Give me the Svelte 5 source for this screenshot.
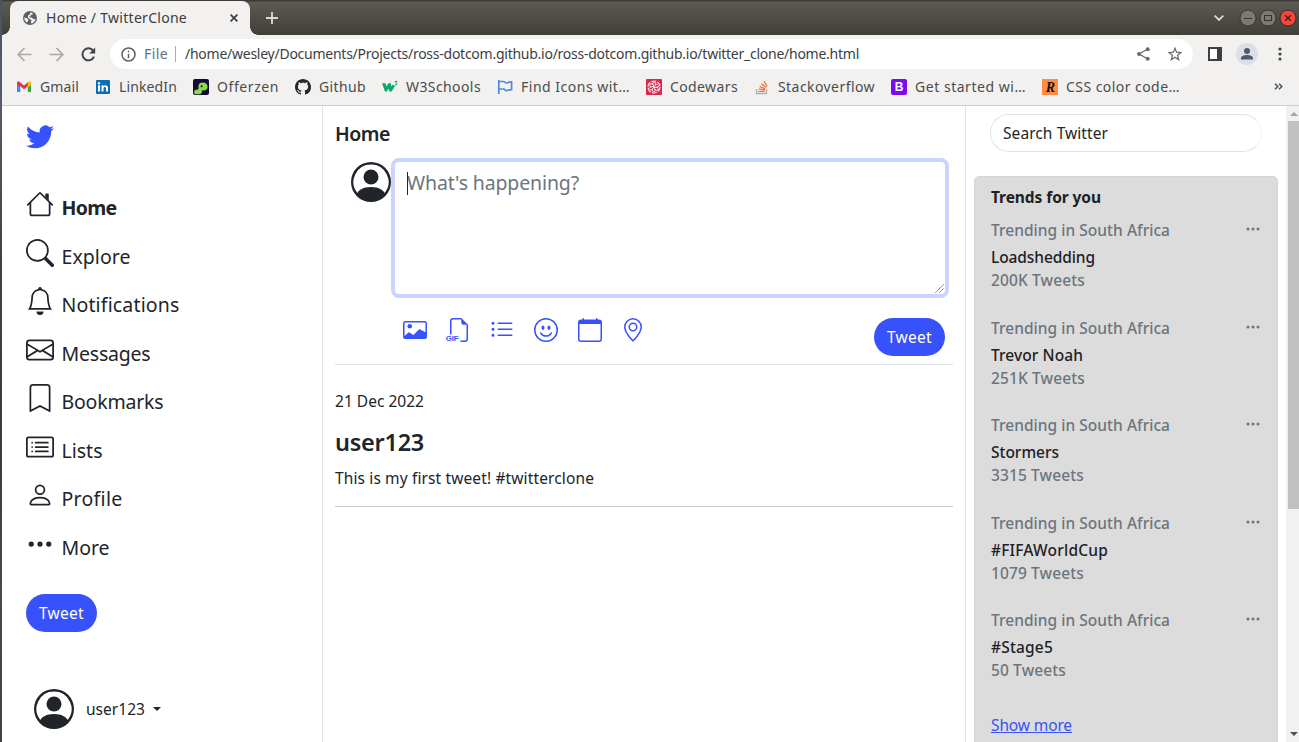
<script>
  // Spreads a label's letters so that it fills the given width.
  function fit(node, width) {
    const natural = node.getBoundingClientRect().width;
    const count = [...node.textContent].length;
    node.style.letterSpacing = (width - natural) / count + 'px';
  }

  const personCircle = [
    'M11 6a3 3 0 1 1-6 0 3 3 0 0 1 6 0z',
    'M0 8a8 8 0 1 1 16 0A8 8 0 0 1 0 8zm8-7a7 7 0 0 0-5.468 11.37C3.242 11.226 4.805 10 8 10s4.757 1.225 5.468 2.37A7 7 0 0 0 8 1z'
  ];
  const twitter = ['M5.026 15c6.038 0 9.341-5.003 9.341-9.334 0-.14 0-.282-.006-.422A6.685 6.685 0 0 0 16 3.542a6.658 6.658 0 0 1-1.889.518 3.301 3.301 0 0 0 1.447-1.817 6.533 6.533 0 0 1-2.087.793A3.286 3.286 0 0 0 7.875 6.03a9.325 9.325 0 0 1-6.767-3.429 3.289 3.289 0 0 0 1.018 4.382A3.323 3.323 0 0 1 .64 6.575v.045a3.288 3.288 0 0 0 2.632 3.218 3.203 3.203 0 0 1-.865.115 3.23 3.23 0 0 1-.614-.057 3.283 3.283 0 0 0 3.067 2.277A6.588 6.588 0 0 1 .78 13.58a6.32 6.32 0 0 1-.78-.045A9.344 9.344 0 0 0 5.026 15z'];
  const dots = ['M3 9.5a1.5 1.5 0 1 1 0-3 1.5 1.5 0 0 1 0 3zm5 0a1.5 1.5 0 1 1 0-3 1.5 1.5 0 0 1 0 3zm5 0a1.5 1.5 0 1 1 0-3 1.5 1.5 0 0 1 0 3z'];
  const github = ['M8 0C3.58 0 0 3.58 0 8c0 3.54 2.29 6.53 5.47 7.59.4.07.55-.17.55-.38 0-.19-.01-.82-.01-1.49-2.01.37-2.53-.49-2.69-.94-.09-.23-.48-.94-.82-1.13-.28-.15-.68-.52-.01-.53.63-.01 1.08.58 1.23.82.72 1.21 1.87.87 2.33.66.07-.52.28-.87.51-1.07-1.78-.2-3.64-.89-3.64-3.95 0-.87.31-1.59.82-2.15-.08-.2-.36-1.02.08-2.12 0 0 .67-.21 2.2.82.64-.18 1.32-.27 2-.27.68 0 1.36.09 2 .27 1.53-1.04 2.2-.82 2.2-.82.44 1.1.16 1.92.08 2.12.51.56.82 1.27.82 2.15 0 3.07-1.87 3.75-3.65 3.95.29.25.54.73.54 1.48 0 1.07-.01 1.93-.01 2.2 0 .21.15.46.55.38A8.012 8.012 0 0 0 16 8c0-4.42-3.58-8-8-8z'];

  const nav = [
    { label: 'Home', width: 55, active: true, paths: [
      'M2 13.5V7h1v6.5a.5.5 0 0 0 .5.5h9a.5.5 0 0 0 .5-.5V7h1v6.5a1.5 1.5 0 0 1-1.5 1.5h-9A1.5 1.5 0 0 1 2 13.5zm11-11V6l-2-2V2.5a.5.5 0 0 1 .5-.5h1a.5.5 0 0 1 .5.5z',
      'M7.293 1.5a1 1 0 0 1 1.414 0l6.647 6.646a.5.5 0 0 1-.708.708L8 2.207 1.354 8.854a.5.5 0 1 1-.708-.708L7.293 1.5z'] },
    { label: 'Explore', width: 69, paths: ['M11.742 10.344a6.5 6.5 0 1 0-1.397 1.398h-.001c.03.04.062.078.098.115l3.85 3.85a1 1 0 0 0 1.415-1.414l-3.85-3.85a1.007 1.007 0 0 0-.115-.1zM12 6.5a5.5 5.5 0 1 1-11 0 5.5 5.5 0 0 1 11 0z'] },
    { label: 'Notifications', width: 118, paths: ['M8 16a2 2 0 0 0 2-2H6a2 2 0 0 0 2 2zM8 1.918l-.797.161A4.002 4.002 0 0 0 4 6c0 .628-.134 2.197-.459 3.742-.16.767-.376 1.566-.663 2.258h10.244c-.287-.692-.502-1.49-.663-2.258C12.134 8.197 12 6.628 12 6a4.002 4.002 0 0 0-3.203-3.92L8 1.917zM14.22 12c.223.447.481.801.78 1H1c.299-.199.557-.553.78-1C2.68 10.2 3 6.88 3 6c0-2.42 1.72-4.44 4.005-4.901a1 1 0 1 1 1.99 0A5.002 5.002 0 0 1 13 6c0 .88.32 4.2 1.22 6z'] },
    { label: 'Messages', width: 89, paths: ['M0 4a2 2 0 0 1 2-2h12a2 2 0 0 1 2 2v8a2 2 0 0 1-2 2H2a2 2 0 0 1-2-2V4Zm2-1a1 1 0 0 0-1 1v.217l7 4.2 7-4.2V4a1 1 0 0 0-1-1H2Zm13 2.383-4.708 2.825L15 11.105V5.383Zm-.034 6.876-5.64-3.471L8 9.583l-1.326-.795-5.64 3.47A1 1 0 0 0 2 13h12a1 1 0 0 0 .966-.741ZM1 11.105l4.708-2.897L1 5.383v5.722Z'] },
    { label: 'Bookmarks', width: 102, paths: ['M2 2a2 2 0 0 1 2-2h8a2 2 0 0 1 2 2v13.5a.5.5 0 0 1-.777.416L8 13.101l-5.223 2.815A.5.5 0 0 1 2 15.5V2zm2-1a1 1 0 0 0-1 1v12.566l4.723-2.482a.5.5 0 0 1 .554 0L13 14.566V2a1 1 0 0 0-1-1H4z'] },
    { label: 'Lists', width: 41, paths: [
      'M14.5 3a.5.5 0 0 1 .5.5v9a.5.5 0 0 1-.5.5h-13a.5.5 0 0 1-.5-.5v-9a.5.5 0 0 1 .5-.5h13zm-13-1A1.5 1.5 0 0 0 0 3.5v9A1.5 1.5 0 0 0 1.5 14h13a1.5 1.5 0 0 0 1.5-1.5v-9A1.5 1.5 0 0 0 14.5 2h-13z',
      'M5 8a.5.5 0 0 1 .5-.5h7a.5.5 0 0 1 0 1h-7A.5.5 0 0 1 5 8zm0-2.5a.5.5 0 0 1 .5-.5h7a.5.5 0 0 1 0 1h-7a.5.5 0 0 1-.5-.5zm0 5a.5.5 0 0 1 .5-.5h7a.5.5 0 0 1 0 1h-7a.5.5 0 0 1-.5-.5zm-1-5a.5.5 0 1 1-1 0 .5.5 0 0 1 1 0zM4 8a.5.5 0 1 1-1 0 .5.5 0 0 1 1 0zm0 2.5a.5.5 0 1 1-1 0 .5.5 0 0 1 1 0z'] },
    { label: 'Profile', width: 61, paths: ['M8 8a3 3 0 1 0 0-6 3 3 0 0 0 0 6Zm2-3a2 2 0 1 1-4 0 2 2 0 0 1 4 0Zm4 8c0 1-1 1-1 1H3s-1 0-1-1 1-4 6-4 6 3 6 4Zm-1-.004c-.001-.246-.154-.986-.832-1.664C11.516 10.68 10.289 10 8 10c-2.29 0-3.516.68-4.168 1.332-.678.678-.83 1.418-.832 1.664h10Z'] },
    { label: 'More', width: 48, paths: dots }
  ];

  const tools = [
    { paths: ['M6.002 5.5a1.5 1.5 0 1 1-3 0 1.5 1.5 0 0 1 3 0z', 'M1.5 2A1.5 1.5 0 0 0 0 3.5v9A1.5 1.5 0 0 0 1.5 14h13a1.5 1.5 0 0 0 1.5-1.5v-9A1.5 1.5 0 0 0 14.5 2h-13zm13 1a.5.5 0 0 1 .5.5v6l-3.775-1.947a.5.5 0 0 0-.577.093l-3.71 3.71-2.66-1.772a.5.5 0 0 0-.63.062L1.002 12v.54A.505.505 0 0 1 1 12.5v-9a.5.5 0 0 1 .5-.5h13z'] },
    { gif: true, paths: ['M14 4.5V14a2 2 0 0 1-2 2H9v-1h3a1 1 0 0 0 1-1V4.5h-2A1.5 1.5 0 0 1 9.5 3V1H4a1 1 0 0 0-1 1v9H2V2a2 2 0 0 1 2-2h5.5L14 4.5Z'] },
    { paths: ['M5 11.5a.5.5 0 0 1 .5-.5h9a.5.5 0 0 1 0 1h-9a.5.5 0 0 1-.5-.5zm0-4a.5.5 0 0 1 .5-.5h9a.5.5 0 0 1 0 1h-9a.5.5 0 0 1-.5-.5zm0-4a.5.5 0 0 1 .5-.5h9a.5.5 0 0 1 0 1h-9a.5.5 0 0 1-.5-.5zm-3 1a1 1 0 1 0 0-2 1 1 0 0 0 0 2zm0 4a1 1 0 1 0 0-2 1 1 0 0 0 0 2zm0 4a1 1 0 1 0 0-2 1 1 0 0 0 0 2z'] },
    { paths: ['M8 15A7 7 0 1 1 8 1a7 7 0 0 1 0 14zm0 1A8 8 0 1 0 8 0a8 8 0 0 0 0 16z', 'M4.285 9.567a.5.5 0 0 1 .683.183A3.498 3.498 0 0 0 8 11.5a3.498 3.498 0 0 0 3.032-1.75.5.5 0 1 1 .866.5A4.498 4.498 0 0 1 8 12.5a4.498 4.498 0 0 1-3.898-2.25.5.5 0 0 1 .183-.683zM7 6.5C7 7.328 6.552 8 6 8s-1-.672-1-1.5S5.448 5 6 5s1 .672 1 1.5zm4 0c0 .828-.448 1.5-1 1.5s-1-.672-1-1.5S9.448 5 10 5s1 .672 1 1.5z'] },
    { paths: ['M3.5 0a.5.5 0 0 1 .5.5V1h8V.5a.5.5 0 0 1 1 0V1h1a2 2 0 0 1 2 2v11a2 2 0 0 1-2 2H2a2 2 0 0 1-2-2V3a2 2 0 0 1 2-2h1V.5a.5.5 0 0 1 .5-.5zM1 4v10a1 1 0 0 0 1 1h12a1 1 0 0 0 1-1V4H1z'] },
    { paths: ['M12.166 8.94c-.524 1.062-1.234 2.12-1.96 3.07A31.493 31.493 0 0 1 8 14.58a31.481 31.481 0 0 1-2.206-2.57c-.726-.95-1.436-2.008-1.96-3.07C3.304 7.867 3 6.862 3 6a5 5 0 0 1 10 0c0 .862-.305 1.867-.834 2.94zM8 16s6-5.686 6-10A6 6 0 0 0 2 6c0 4.314 6 10 6 10z', 'M8 8a2 2 0 1 1 0-4 2 2 0 0 1 0 4zm0 1a3 3 0 1 0 0-6 3 3 0 0 0 0 6z'] }
  ];

  const bookmarks = [
    { id: 'gmail', label: 'Gmail', width: 39 },
    { id: 'linkedin', label: 'LinkedIn', width: 58 },
    { id: 'offerzen', label: 'Offerzen', width: 62 },
    { id: 'github', label: 'Github', width: 47 },
    { id: 'w3', label: 'W3Schools', width: 75 },
    { id: 'flag', label: 'Find Icons wit…', width: 109 },
    { id: 'codewars', label: 'Codewars', width: 68 },
    { id: 'stack', label: 'Stackoverflow', width: 97 },
    { id: 'bootstrap', label: 'Get started wi…', width: 111 },
    { id: 'rapid', label: 'CSS color code…', width: 114 }
  ];

  const trends = [
    { name: 'Loadshedding', nameWidth: 104, count: '200K Tweets', countWidth: 94 },
    { name: 'Trevor Noah', nameWidth: 92, count: '251K Tweets', countWidth: 94 },
    { name: 'Stormers', nameWidth: 68, count: '3315 Tweets', countWidth: 93 },
    { name: '#FIFAWorldCup', nameWidth: 117, count: '1079 Tweets', countWidth: 93 },
    { name: '#Stage5', nameWidth: 62, count: '50 Tweets', countWidth: 75 }
  ];
</script>

{#snippet icon(paths, size)}
  <svg class="icon" width={size} height={size} viewBox="0 0 16 16" fill="currentColor">
    {#each paths as d}<path {d} fill-rule="evenodd" />{/each}
  </svg>
{/snippet}

<div class="screen">
  <div class="desktop"></div>
  <div class="window">
    <header class="tabstrip">
      <div class="tab">
        <svg width="14" height="14" viewBox="0 0 14 14">
          <circle cx="7" cy="7" r="7" fill="#5b6066" />
          <path d="M1.2 6.4 3.8 7.3 5.3 8.2 5.2 10.2 3.6 11.6A6 6 0 0 1 1.2 6.4ZM7.2 1.2 10 2.2 9.4 3.4 7.8 3.9 7.4 5.2 6 5.6 7 6.6 9 6.4 10 8 12.6 8.2A6 6 0 0 1 8.4 12.6L7.8 10.8 8.8 9.6 7 8.2 4.9 6.5 5 4.5 7 3.2Z" fill="#f2f1f0" />
        </svg>
        <span class="tab-title"><span use:fit={141}>Home / TwitterClone</span></span>
        <svg width="8" height="8" viewBox="0 0 8 8" stroke="#3c3d3e" stroke-width="1.7"><path d="M.6.6 7.4 7.4M7.4.6.6 7.4" /></svg>
      </div>
      <svg class="plus" width="12" height="12" viewBox="0 0 12 12" stroke="#dfdbd2" stroke-width="1.8"><path d="M6 0V12M0 6H12" /></svg>
      <div class="controls">
        <svg class="chevron" width="10" height="6" viewBox="0 0 10 6" fill="none" stroke="#dfdbd2" stroke-width="1.8"><path d="M.7.7 5 5 9.3.7" /></svg>
        <svg width="18" height="18" viewBox="0 0 18 18"><circle cx="9" cy="9" r="8" fill="#7b7a72" stroke="#34332e" /><path d="M5 9.5H13" stroke="#34332e" /></svg>
        <svg width="18" height="18" viewBox="0 0 18 18"><circle cx="9" cy="9" r="8" fill="#7b7a72" stroke="#34332e" /><rect x="5.5" y="6.5" width="7" height="5" fill="none" stroke="#34332e" /></svg>
        <svg width="18" height="18" viewBox="0 0 18 18"><circle cx="9" cy="9" r="8" fill="#f0483e" stroke="#3d2a26" /><path d="M6.2 6.2 11.8 11.8M11.8 6.2 6.2 11.8" stroke="#4a1712" stroke-width="1.3" /></svg>
      </div>
    </header>

    <div class="toolbar">
      <svg width="15" height="15" viewBox="0 0 15 15" fill="none" stroke="#aaa9a7" stroke-width="1.7"><path d="M14.5 7.5H1.2M7.5 1 1.2 7.5 7.5 14" /></svg>
      <svg width="15" height="15" viewBox="0 0 15 15" fill="none" stroke="#aaa9a7" stroke-width="1.7"><path d="M.5 7.5H13.8M7.5 1 13.8 7.5 7.5 14" /></svg>
      <svg width="15" height="15" viewBox="0 0 15 15"><path d="M12.4 3.9A6 6 0 1 0 13 9.7" fill="none" stroke="#454545" stroke-width="2" /><path d="M14.2 .6V6.6H8.2Z" fill="#454545" /></svg>
      <div class="address">
        <svg width="15" height="15" viewBox="0 0 15 15" fill="none" stroke="#5c5f63" stroke-width="1.5"><circle cx="7.5" cy="7.5" r="6.5" /><path d="M7.5 6.7V11.2M7.5 3.8V5.3" /></svg>
        <span class="scheme"><span use:fit={24}>File</span></span>
        <span class="url"><span use:fit={674}>/home/wesley/Documents/Projects/ross-dotcom.github.io/ross-dotcom.github.io/twitter_clone/home.html</span></span>
        <svg class="share" width="13" height="14" viewBox="0 0 13 14"><path d="M11 2 2 7 11 12" fill="none" stroke="#6a6a6a" stroke-width="1.3" /><circle cx="10.7" cy="2.2" r="2" fill="#6a6a6a" /><circle cx="2" cy="7" r="2" fill="#6a6a6a" /><circle cx="10.7" cy="11.8" r="2" fill="#6a6a6a" /></svg>
        <svg width="14" height="14" viewBox="0 0 14 14"><path d="M7 1.3 8.6 5.2 13 5.5 9.6 8.3 10.7 12.7 7 10.3 3.3 12.7 4.4 8.3 1 5.5 5.4 5.2Z" fill="none" stroke="#6a6a6a" stroke-width="1.3" /></svg>
      </div>
      <svg class="panel" width="14" height="14" viewBox="0 0 14 14"><rect x="1" y="1" width="12" height="12" fill="#fff" stroke="#3f3f3f" stroke-width="2" /><rect x="9" width="5" height="14" fill="#3f3f3f" /></svg>
      <svg class="account" width="22" height="22" viewBox="0 0 22 22"><circle cx="11" cy="11" r="11" fill="#dbe0e6" /><circle cx="11" cy="8" r="3" fill="#4e5a6e" /><path d="M5 16.5V15C5 13 8 12 11 12S17 13 17 15V16.5Z" fill="#4e5a6e" /></svg>
      <svg class="kebab" width="4" height="14" viewBox="0 0 4 14" fill="#454545"><circle cx="2" cy="2" r="1.6" /><circle cx="2" cy="7" r="1.6" /><circle cx="2" cy="12" r="1.6" /></svg>
    </div>

    <nav class="bookmarks">
      {#each bookmarks as b}
        <div class="bookmark">
          {#if b.id === 'github'}
            <span class="gh">{@render icon(github, 16)}</span>
          {:else}
            <svg width="16" height="16" viewBox="0 0 16 16">
              {#if b.id === 'gmail'}
                <path d="M1 4V13H4.3V6Z" fill="#4285f4" /><path d="M15 4V13H11.8V6Z" fill="#34a853" /><path d="M11.8 6 11.8 3.6Q15-.1 15 4.5V6L11.8 8.6Z" fill="#fbbc04" /><path d="M1 5V4Q1 1.2 4 3.2L8 6.4 11.8 3.3V7.2L8 10.2 4.3 7.3 1 6Z" fill="#ea3340" />
              {:else if b.id === 'linkedin'}
                <rect x="1" y="1" width="14" height="14" rx="1" fill="#0a6eb4" /><path d="M3 6.3H5V12.6H3ZM6.5 6.3H8.4V7.2C9.5 5.5 13 5.8 13 8.9V12.6H11V9.4C11 7.4 8.5 7.4 8.5 9.4V12.6H6.5Z" fill="#fff" /><circle cx="4" cy="4.2" r="1.2" fill="#fff" />
              {:else if b.id === 'offerzen'}
                <rect width="16" height="16" rx="2" fill="#140a35" /><path d="M5.5 6.5Q6 3.5 9.5 3.5 14.5 3.7 14.6 8 14.4 11.3 10.5 11.5L8.8 11.4V13.5Q8.5 15.2 6.5 15.2H2Q.8 14 1.2 12 2 10.5 5.4 10.6Z" fill="#86dc4b" /><circle cx="8.6" cy="7.3" r="1" fill="#140a35" />
              {:else if b.id === 'w3'}
                <path d="M0 4.2H3.4L4.7 7.4 6.2 4.2H8.8L9.4 7.6 10.8 5.6 13 7 9.6 12.6H7.5L6.5 9.6 4.8 12.6H3Z" fill="#05aa6d" /><path d="M12.7 2.4H15L13.8 4Q16.3 5.6 13 6.4" fill="none" stroke="#05aa6d" />
              {:else if b.id === 'flag'}
                <path d="M1.8 1V15M2 2.5H6.5C8 2.5 8 4 9.5 4S12 2.6 14.6 2.8V10.6C12 10.4 11 11.6 9.5 11.6S8 10 6.5 10H2" fill="none" stroke="#5489d6" stroke-width="1.7" />
              {:else if b.id === 'codewars'}
                <rect width="16" height="16" rx="1" fill="#d9284f" /><circle cx="8" cy="8" r="6" fill="none" stroke="#fbe2e8" stroke-width="1.2" stroke-dasharray="5 1.2" />
                {#each [0, 60, 120, 180, 240, 300] as a}<path d="M8 8Q10.6 6.6 9.4 3.4M8.8 5.3Q11.6 4.2 12.5 6.5" transform="rotate({a} 8 8)" fill="none" stroke="#fbe2e8" stroke-width=".9" />{/each}
              {:else if b.id === 'stack'}
                <path d="M2.5 10V14.5H12.5V10" fill="none" stroke="#aeb0b2" stroke-width="1.3" /><path d="M4.5 12.3H10.6M4.8 9.8 10.8 11M5.6 7.3 11.1 9.9M7.4 4.7 12 8.6M10 2.4 13.2 7.3" stroke="#ee7340" stroke-width="1.3" />
              {:else if b.id === 'bootstrap'}
                <rect width="16" height="16" rx="2" fill="#7a0cf0" /><text x="8" y="12.3" text-anchor="middle" class="letter-b">B</text>
              {:else}
                <rect width="16" height="16" fill="#ff8d44" /><text x="8.3" y="13" text-anchor="middle" class="letter-r">R</text>
              {/if}
            </svg>
          {/if}
          <span use:fit={b.width}>{b.label}</span>
        </div>
      {/each}
      <svg class="overflow" width="9" height="7" viewBox="0 0 9 7" fill="none" stroke="#4d5055" stroke-width="1.5"><path d="M1 .7 3.8 3.5 1 6.3M5 .7 7.8 3.5 5 6.3" /></svg>
    </nav>

    <div class="page">
      <aside class="sidebar">
        <div class="logo">{@render icon(twitter, 28)}</div>
        <ul>
          {#each nav as n}
            <li class:active={n.active}>
              {@render icon(n.paths, 28)}
              <span use:fit={n.width}>{n.label}</span>
            </li>
          {/each}
        </ul>
        <button class="pill"><span use:fit={45}>Tweet</span></button>
        <div class="profile">
          {@render icon(personCircle, 40)}
          <span class="user"><span use:fit={59}>user123</span></span>
          <i class="caret"></i>
        </div>
      </aside>

      <main>
        <h1><span use:fit={55}>Home</span></h1>
        <div class="compose">
          {@render icon(personCircle, 40)}
          <div class="editor">
            <i class="cursor"></i><span use:fit={172}>What's happening?</span>
            <svg class="grip" width="9" height="9" viewBox="0 0 9 9" stroke="#555" stroke-dasharray="1.2 .5"><path d="M.5 8.5 8.5 .5M4.5 8.5 8.5 4.5" /></svg>
          </div>
        </div>
        <div class="actions">
          <div class="tools">
            {#each tools as t}
              <span class="tool">{@render icon(t.paths, 24)}{#if t.gif}<b>GIF</b>{/if}</span>
            {/each}
          </div>
          <button class="pill"><span use:fit={45}>Tweet</span></button>
        </div>
        <article>
          <p class="date"><span use:fit={89}>21 Dec 2022</span></p>
          <h2><span use:fit={89}>user123</span></h2>
          <p><span use:fit={259}>This is my first tweet! #twitterclone</span></p>
        </article>
      </main>

      <aside class="right">
        <div class="search"><span use:fit={105}>Search Twitter</span></div>
        <section class="card">
          <h3><span use:fit={110}>Trends for you</span></h3>
          {#each trends as t}
            <div class="trend">
              <div class="row muted"><span use:fit={179}>Trending in South Africa</span>{@render icon(dots, 16)}</div>
              <div class="name"><span use:fit={t.nameWidth}>{t.name}</span></div>
              <div class="muted count"><span use:fit={t.countWidth}>{t.count}</span></div>
            </div>
          {/each}
          <a href="#more"><span use:fit={81}>Show more</span></a>
        </section>
      </aside>

      <div class="scrollbar">
        <i class="up"></i>
        <div class="thumb"></div>
        <i class="down"></i>
      </div>
    </div>
  </div>
</div>

<style>
  :global(body) { overflow: hidden; }
  .screen {
    display: flex; width: 1299px; height: 742px; overflow: hidden; background: #fff;
    font-family: "Noto Sans", "Open Sans", sans-serif; font-size: 15.5px; line-height: 24px; color: #212529;
    white-space: nowrap; box-sizing: border-box;
  }
  .screen :is(div, main, aside, header, button, section, article) { box-sizing: border-box; }
  svg { display: block; flex: none; }
  h1, h2, h3, p, ul { margin: 0; padding: 0; list-style: none; }
  .desktop { width: 2px; background: linear-gradient(#4b5261, #555d6a 14%, #3f433f 35%, #3b3c35 60%, #4c4940 80%, #434238); }
  .window { flex: 1; display: flex; flex-direction: column; min-width: 0; }

  .tabstrip { height: 35px; display: flex; background: linear-gradient(#3c3b37 0 1px, #5c5b52 2px, #3f3e39); padding-left: 8px; }
  .tab {
    position: relative; width: 240px; height: 34px; margin-top: 1px; border-radius: 8px 8px 0 0; background: #f2f1f0;
    display: flex; align-items: center; padding: 0 12px 0 13px; font-size: 14px; color: #3c3d3e;
  }
  .tab::before, .tab::after { content: ""; position: absolute; bottom: 0; width: 8px; height: 8px; }
  .tab::before { left: -8px; background: radial-gradient(circle at 0 0, transparent 7.5px, #f2f1f0 8px); }
  .tab::after { right: -8px; background: radial-gradient(circle at 100% 0, transparent 7.5px, #f2f1f0 8px); }
  .tab-title { flex: 1; margin-left: 9px; }
  .plus { margin: 12px 0 0 16px; }
  .controls { margin: 9px 2px 0 auto; display: flex; gap: 2px; }
  .chevron { margin: 6px 13px 0 0; }

  .toolbar { height: 38px; flex: none; background: #f2f1f0; display: flex; align-items: center; padding: 0 15px; }
  .toolbar > svg + svg { margin-left: 17px; }
  .address { flex: 1; height: 30px; margin: 0 0 0 14px; border-radius: 15px; background: #fff; display: flex; align-items: center; padding: 0 11px 0 11px; font-size: 14px; }
  .scheme { margin-left: 8px; padding-right: 7px; border-right: 1px solid #a9abae; line-height: 16px; color: #5f6f84; width: 32px; box-sizing: border-box; }
  .url { margin-left: 9px; color: #3c3e43; }
  .share { margin: 0 18px 0 auto; }
  .toolbar .panel { margin-left: 15px; }
  .toolbar .account { margin-left: 14px; }
  .toolbar .kebab { margin: 0 2px 0 20px; }

  .bookmarks { height: 33px; flex: none; box-sizing: border-box; background: #f2f1f0; border-bottom: 1px solid #cdcccb; display: flex; gap: 16px; padding: 0 16px 5px 14px; align-items: center; font-size: 14px; color: #4b4c4d; }
  .bookmark { display: flex; align-items: center; gap: 8px; }
  .gh { color: #24292f; }
  .letter-b { font: 700 12px "Liberation Sans", sans-serif; fill: #fff; }
  .letter-r { font: italic 700 14px "Liberation Serif", serif; fill: #111; }
  .overflow { margin-left: auto; }

  .page { flex: 1; display: flex; min-height: 0; }
  .sidebar { width: 321px; border-right: 1px solid #dee2e6; padding: 16px 24px 0; }
  .logo { color: #3751fb; height: 68px; }
  li { display: flex; gap: 7.5px; height: 48.5px; font-size: 19.5px; line-height: 35px; }
  li.active { font-weight: 700; }
  .pill { display: flex; align-items: center; justify-content: center; width: 71px; height: 38px; border: 0; border-radius: 19px; background: #3751fb; color: #fff; font: inherit; padding: 0; }
  .sidebar .pill { margin-top: 16px; }
  .profile { display: flex; align-items: center; padding-left: 8px; margin-top: 57px; }
  .user { margin-left: 12px; }
  .caret { margin-left: 8px; border: 4.5px solid transparent; border-top-color: #212529; border-bottom: 0; }

  main { width: 643px; border-right: 1px solid #dee2e6; padding: 16px 12px 0; }
  h1 { font-size: 19.5px; line-height: 24px; font-weight: 600; }
  .compose { display: flex; align-items: flex-start; margin-top: 12px; padding-left: 16px; }
  .compose > :global(svg) { margin-top: 4px; }
  .editor { position: relative; width: 558px; height: 140px; border: 4px solid #cbd4fe; border-radius: 8px; padding: 6px 12px; font-size: 19.5px; line-height: 30px; color: #6c757d; }
  .cursor { position: absolute; left: 12px; top: 10px; width: 1px; height: 23px; background: #212529; }
  .grip { position: absolute; right: 1px; bottom: 1px; }
  .actions { display: flex; justify-content: space-between; padding: 20px 8px 8px 68px; border-bottom: 1px solid #dee2e6; height: 67px; }
  .tools { display: flex; gap: 19.7px; color: #3751fb; }
  .tool { position: relative; height: 24px; }
  .tool b { position: absolute; left: -1px; bottom: -1px; font: 700 8px/8px "Liberation Sans", sans-serif; letter-spacing: -.2px; }
  article { height: 142px; border-bottom: 1px solid #c8c9ca; padding-top: 24px; }
  h2 { font-size: 23.5px; line-height: 29px; font-weight: 600; margin: 15px 0 9px; }

  .right { width: 320px; padding: 8px 8px 0; display: flex; flex-direction: column; }
  .search { width: 272px; height: 38px; flex: none; margin: 0 0 24px 16px; border: 1px solid #dee2e6; border-right-color: #f3f4f6; border-radius: 19px; padding: 6px 12px; }
  .card { height: 580px; border-radius: 5px; background: #dcdcdc; border: 1px solid #d6d6d6; padding: 8px 16px; }
  h3 { font-size: 15.5px; line-height: 24px; font-weight: 700; margin-bottom: 9px; }
  .trend { height: 97.5px; font-weight: 500; }
  .row { display: flex; justify-content: space-between; height: 27px; }
  .row > :global(svg) { margin: 3px 0 0 0; }
  .muted { color: #6c757d; }
  .name { height: 23.4px; }
  .name, h3 { color: #1d2125; }
  a { display: block; color: #3751fb; text-decoration: none; margin-top: 7px; }
  a span { text-decoration: underline; }

  .scrollbar { flex: 1; background: #f1f1f1; display: flex; flex-direction: column; padding-left: 2px; }
  .up, .down { align-self: flex-start; margin-left: 2px; border: 4px solid transparent; }
  .up { border-bottom-color: #a3a3a3; border-top: 0; margin-top: 6px; }
  .thumb { height: 388px; margin-top: 5px; background: #c1c1c1; }
  .down { border-top-color: #505050; border-bottom: 0; margin-top: auto; margin-bottom: 6px; }
</style>
